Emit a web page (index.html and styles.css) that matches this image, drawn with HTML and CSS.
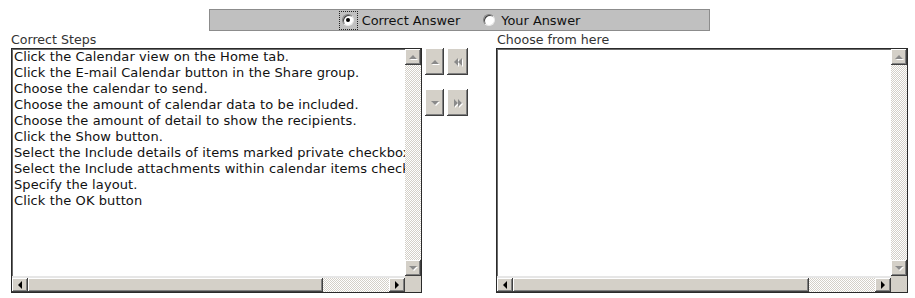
FILE: index.html
```html
<!DOCTYPE html>
<html>
<head>
<meta charset="utf-8">
<link rel="stylesheet" href="styles.css">
</head>
<body>
<div class="page">
  <div class="topbar">
    <label class="opt focus"><span class="radio checked"></span></label><span class="opt-text">Correct Answer</span>
    <label class="opt second"><span class="radio"></span></label><span class="opt-text">Your Answer</span>
  </div>
  <div class="main">
    <div class="col col-left">
      <div class="caption">Correct Steps</div>
      <div class="listbox">
        <div class="content">
          <div class="item">Click the Calendar view on the Home tab.</div>
          <div class="item">Click the E-mail Calendar button in the Share group.</div>
          <div class="item">Choose the calendar to send.</div>
          <div class="item">Choose the amount of calendar data to be included.</div>
          <div class="item">Choose the amount of detail to show the recipients.</div>
          <div class="item">Click the Show button.</div>
          <div class="item">Select the Include details of items marked private checkbox.</div>
          <div class="item">Select the Include attachments within calendar items checkbox.</div>
          <div class="item">Specify the layout.</div>
          <div class="item">Click the OK button</div>
        </div>
        <div class="vscroll">
          <div class="sbtn"><span class="tri up dis"></span></div>
          <div class="track"></div>
          <div class="sbtn"><span class="tri down dis"></span></div>
        </div>
        <div class="hscroll">
          <div class="sbtn"><span class="tri left"></span></div>
          <div class="thumb thumb-left"></div>
          <div class="track"></div>
          <div class="sbtn"><span class="tri right"></span></div>
        </div>
        <div class="corner"></div>
      </div>
    </div>
    <div class="mid">
      <div class="mid-row">
        <div class="mbtn narrow"><span class="tri up dis"></span></div>
        <div class="mbtn wide"><span class="dbl"><span class="tri left dis"></span><span class="tri left dis"></span></span></div>
      </div>
      <div class="mid-row">
        <div class="mbtn narrow"><span class="tri down dis"></span></div>
        <div class="mbtn wide"><span class="dbl"><span class="tri right dis"></span><span class="tri right dis"></span></span></div>
      </div>
    </div>
    <div class="col col-right">
      <div class="caption cap-right">Choose from here</div>
      <div class="listbox">
        <div class="content"></div>
        <div class="vscroll">
          <div class="sbtn"><span class="tri up dis"></span></div>
          <div class="track"></div>
          <div class="sbtn"><span class="tri down dis"></span></div>
        </div>
        <div class="hscroll">
          <div class="sbtn"><span class="tri left"></span></div>
          <div class="thumb thumb-right"></div>
          <div class="track"></div>
          <div class="sbtn"><span class="tri right"></span></div>
        </div>
        <div class="corner"></div>
      </div>
    </div>
  </div>
</div>
</body>
</html>
```
FILE: styles.css
```css
html, body {
  margin: 0;
  padding: 0;
  background: #ffffff;
}
body {
  font-family: "DejaVu Sans", Verdana, sans-serif;
  font-size: 12px;
  color: #000;
}
.page {
  width: 915px;
  height: 298px;
}
.topbar {
  box-sizing: border-box;
  margin: 9px 0 0 209px;
  width: 501px;
  height: 22px;
  background: #c0c0c0;
  border: 1px solid #8c8c8c;
  display: flex;
  align-items: center;
  justify-content: center;
  color: #111;
  font-size: 12.9px;
}
.opt {
  display: flex;
  align-items: center;
  justify-content: center;
  width: 19px;
  height: 19px;
  box-sizing: border-box;
  border: 1px solid transparent;
  margin-right: 4px;
}
.opt.focus {
  border: 1px dotted #222;
}
.opt.second {
  margin-left: 19px;
  margin-right: 3px;
}
.opt-text {
  line-height: 16px;
  padding-top: 2px;
}
.radio {
  box-sizing: border-box;
  width: 12px;
  height: 12px;
  border-radius: 50%;
  background: #fff;
  border: 1px solid;
  border-color: #808080 #e8e8e8 #e8e8e8 #808080;
  box-shadow: inset 1px 1px 0 #404040;
  position: relative;
}
.radio.checked::after {
  content: "";
  position: absolute;
  left: 3px;
  top: 3px;
  width: 4px;
  height: 4px;
  border-radius: 50%;
  background: #000;
}
.main {
  display: flex;
  align-items: flex-start;
  padding-left: 11px;
}
.col {
  display: flex;
  flex-direction: column;
}
.col-left {
  width: 411px;
}
.col-right {
  width: 412px;
  margin-left: 28px;
}
.caption {
  height: 17px;
  line-height: 17px;
  color: #333;
  font-size: 12.6px;
}
.cap-right {
  padding-left: 1px;
}
.listbox {
  box-sizing: border-box;
  height: 245px;
  border: 1px solid #2a2a2a;
  box-shadow: inset 1px 1px 0 #6a6a6a;
  display: grid;
  grid-template-columns: 1fr 16px;
  grid-template-rows: 1fr 16px;
  background: #fff;
}
.content {
  overflow: hidden;
  padding: 0 0 0 2px;
  white-space: nowrap;
  color: #111;
  font-size: 13px;
  letter-spacing: 0.1px;
}
.item {
  height: 16px;
  line-height: 16px;
}
.vscroll {
  display: flex;
  flex-direction: column;
}
.hscroll {
  display: flex;
  border-top: 2px solid #e6e6e6;
  box-sizing: border-box;
}
.corner {
  background: #d4d0c8;
}
.track {
  flex: 1;
  background-color: #fff;
  background-image: repeating-conic-gradient(#d4d0c8 0 25%, #fff 0 50%);
  background-size: 2px 2px;
}
.sbtn, .thumb, .mbtn {
  background: #d4d0c8;
  box-shadow: inset -1px -1px 0 #404040, inset 1px 1px 0 #ffffff, inset -2px -2px 0 #808080;
  box-sizing: border-box;
}
.sbtn {
  width: 16px;
  height: 16px;
  flex: none;
  display: flex;
  align-items: center;
  justify-content: center;
}
.hscroll .sbtn {
  height: 14px;
}
.thumb-left {
  width: 295px;
  flex: none;
}
.thumb-right {
  width: 296px;
  flex: none;
}
.tri {
  width: 0;
  height: 0;
  display: block;
}
.tri.up {
  border-left: 4px solid transparent;
  border-right: 4px solid transparent;
  border-bottom: 4px solid #000;
}
.tri.down {
  border-left: 4px solid transparent;
  border-right: 4px solid transparent;
  border-top: 4px solid #000;
}
.tri.left {
  border-top: 4px solid transparent;
  border-bottom: 4px solid transparent;
  border-right: 4px solid #000;
}
.tri.right {
  border-top: 4px solid transparent;
  border-bottom: 4px solid transparent;
  border-left: 4px solid #000;
}
.tri.up.dis { border-bottom-color: #8a8a8a; filter: drop-shadow(1px 1px 0 #fff); }
.tri.down.dis { border-top-color: #8a8a8a; filter: drop-shadow(1px 1px 0 #fff); }
.tri.left.dis { border-right-color: #8a8a8a; filter: drop-shadow(1px 1px 0 #fff); }
.tri.right.dis { border-left-color: #8a8a8a; filter: drop-shadow(1px 1px 0 #fff); }
.mid {
  display: flex;
  flex-direction: column;
  gap: 14px;
  margin-left: 3px;
  margin-top: 17px;
}
.mid-row {
  display: flex;
  gap: 3px;
}
.mbtn {
  height: 27px;
  display: flex;
  align-items: center;
  justify-content: center;
}
.mbtn.narrow { width: 19px; }
.mbtn.wide { width: 21px; }
.dbl {
  display: flex;
}
```
